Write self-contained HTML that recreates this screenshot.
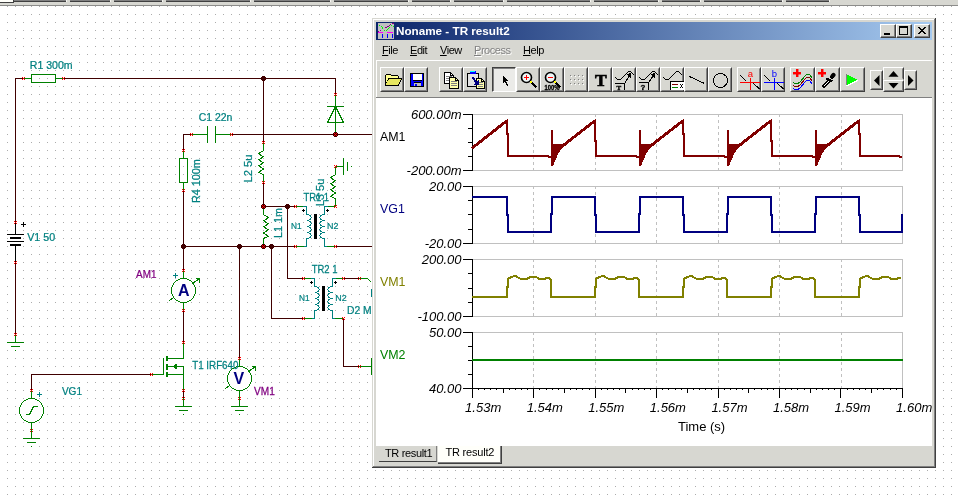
<!DOCTYPE html><html><head><meta charset="utf-8"><title>Noname - TR result2</title><style>
html,body{margin:0;padding:0}
body{width:958px;height:496px;overflow:hidden;position:relative;background:#fff;font-family:"Liberation Sans",sans-serif}
svg text{font-family:"Liberation Sans",sans-serif}
#bg,#fg{position:absolute;left:0;top:0}
#fg,#bg,#win{will-change:transform}
#win{position:absolute;left:372px;top:18px;width:564px;height:450px;background:#d7d7d1;overflow:hidden}
.ed{position:absolute}
#title{position:absolute;left:4px;top:4px;width:556px;height:18px;background:linear-gradient(90deg,#0a246a,#a6caf0)}
#tt{position:absolute;left:20px;top:2px;color:#fff;font-weight:bold;font-size:11.7px;line-height:14px;white-space:nowrap}
.cb{position:absolute;width:14px;height:12px;background:#d7d7d1;border:1px solid;border-color:#fff #404040 #404040 #fff;box-shadow:inset -1px -1px 0 #808080}
.mi{position:absolute;font-size:11px;line-height:14px;color:#000;white-space:nowrap;letter-spacing:-0.45px}
.mi.dis{color:#808080;text-shadow:1px 1px 0 #fff}
.b{position:absolute;box-sizing:border-box;border:1px solid;border-color:#fff #404040 #404040 #fff}
.b>i{position:absolute;right:0;bottom:0;left:0;top:0;border:1px solid;border-color:transparent #808080 #808080 transparent}
.b.nb{border-bottom-color:transparent}.b.nb>i{border-bottom-color:transparent}
.b.p{border-color:#404040 #fff #fff #404040;background:#ebebe8;box-shadow:inset 1px 1px 0 #808080}
.b svg{margin:-1px}
#client{position:absolute;left:4px;top:80px;width:556px;height:348px;background:#fff}
.tab{position:absolute;background:#d7d7d1;box-sizing:border-box;border-bottom:1px solid #404040;border-right:1px solid #808080;font-size:11px}
.tab.act{background:#fffffa;border-right:1px solid #404040;box-shadow:inset -1px -1px 0 #808080}
.tab span{position:absolute;white-space:nowrap;line-height:14px;letter-spacing:-0.35px}
</style></head><body>
<svg id="bg" width="958" height="496" shape-rendering="crispEdges"><defs><pattern id="dots" x="0" y="0" width="8" height="8" patternUnits="userSpaceOnUse"><rect x="7" y="6" width="1" height="1" fill="#acacac"/></pattern></defs>
<rect x="0" y="0" width="958" height="496" fill="url(#dots)"/>
<rect x="0" y="0" width="958" height="5" fill="#d7d7d1"/><rect x="0" y="5" width="958" height="1" fill="#8c8c8a"/><rect x="14" y="0" width="52" height="1" fill="#808080"/><rect x="14" y="1" width="52" height="1" fill="#404040"/><rect x="66" y="0" width="1" height="2" fill="#f4f4f0"/><rect x="70" y="0" width="40" height="1" fill="#808080"/><rect x="70" y="1" width="40" height="1" fill="#404040"/><rect x="110" y="0" width="1" height="2" fill="#f4f4f0"/><rect x="114" y="0" width="48" height="1" fill="#808080"/><rect x="114" y="1" width="48" height="1" fill="#404040"/><rect x="162" y="0" width="1" height="2" fill="#f4f4f0"/><rect x="166" y="0" width="84" height="1" fill="#808080"/><rect x="166" y="1" width="84" height="1" fill="#404040"/><rect x="250" y="0" width="1" height="2" fill="#f4f4f0"/><rect x="254" y="0" width="76" height="1" fill="#808080"/><rect x="254" y="1" width="76" height="1" fill="#404040"/><rect x="330" y="0" width="1" height="2" fill="#f4f4f0"/><rect x="334" y="0" width="74" height="1" fill="#808080"/><rect x="334" y="1" width="74" height="1" fill="#404040"/><rect x="408" y="0" width="1" height="2" fill="#f4f4f0"/><rect x="412" y="0" width="38" height="1" fill="#808080"/><rect x="412" y="1" width="38" height="1" fill="#404040"/><rect x="450" y="0" width="1" height="2" fill="#f4f4f0"/><rect x="454" y="0" width="49" height="1" fill="#808080"/><rect x="454" y="1" width="49" height="1" fill="#404040"/><rect x="503" y="0" width="1" height="2" fill="#f4f4f0"/><rect x="507" y="0" width="83" height="1" fill="#808080"/><rect x="507" y="1" width="83" height="1" fill="#404040"/><rect x="590" y="0" width="1" height="2" fill="#f4f4f0"/><rect x="594" y="0" width="64" height="1" fill="#808080"/><rect x="594" y="1" width="64" height="1" fill="#404040"/><rect x="658" y="0" width="1" height="2" fill="#f4f4f0"/><rect x="662" y="0" width="38" height="1" fill="#808080"/><rect x="662" y="1" width="38" height="1" fill="#404040"/><rect x="700" y="0" width="1" height="2" fill="#f4f4f0"/><rect x="704" y="0" width="78" height="1" fill="#808080"/><rect x="704" y="1" width="78" height="1" fill="#404040"/><rect x="782" y="0" width="1" height="2" fill="#f4f4f0"/><rect x="786" y="0" width="43" height="1" fill="#808080"/><rect x="786" y="1" width="43" height="1" fill="#404040"/><rect x="829" y="0" width="1" height="2" fill="#f4f4f0"/><rect x="0" y="0" width="13" height="2" fill="#fffffa"/><rect x="0" y="2" width="14" height="1" fill="#404040"/><rect x="13" y="0" width="1" height="3" fill="#404040"/>
<rect x="15" y="78" width="9" height="1" fill="#400000"/>
<rect x="15" y="78" width="1" height="145" fill="#400000"/>
<rect x="63" y="78" width="273" height="1" fill="#400000"/>
<rect x="335" y="78" width="1" height="17" fill="#400000"/>
<rect x="263" y="78" width="1" height="65" fill="#400000"/>
<rect x="183" y="134" width="9" height="1" fill="#400000"/>
<rect x="183" y="134" width="1" height="17" fill="#400000"/>
<rect x="231" y="134" width="150" height="1" fill="#400000"/>
<rect x="183" y="190" width="1" height="81" fill="#400000"/>
<rect x="263" y="182" width="1" height="25" fill="#400000"/>
<rect x="263" y="206" width="33" height="1" fill="#400000"/>
<rect x="183" y="246" width="113" height="1" fill="#400000"/>
<rect x="335" y="246" width="46" height="1" fill="#400000"/>
<rect x="287" y="206" width="1" height="73" fill="#400000"/>
<rect x="287" y="278" width="17" height="1" fill="#400000"/>
<rect x="271" y="246" width="1" height="73" fill="#400000"/>
<rect x="271" y="318" width="33" height="1" fill="#400000"/>
<rect x="239" y="246" width="1" height="113" fill="#400000"/>
<rect x="183" y="310" width="1" height="33" fill="#400000"/>
<rect x="183" y="390" width="1" height="9" fill="#400000"/>
<rect x="15" y="262" width="1" height="73" fill="#400000"/>
<rect x="31" y="374" width="121" height="1" fill="#400000"/>
<rect x="31" y="374" width="1" height="17" fill="#400000"/>
<rect x="343" y="278" width="17" height="1" fill="#400000"/>
<rect x="343" y="318" width="1" height="49" fill="#400000"/>
<rect x="343" y="366" width="17" height="1" fill="#400000"/>
<rect x="23" y="78" width="9" height="1" fill="#008000"/>
<rect x="55" y="78" width="9" height="1" fill="#008000"/>
<rect x="31" y="74" width="25" height="1" fill="#008000"/>
<rect x="31" y="82" width="25" height="1" fill="#008000"/>
<rect x="31" y="74" width="1" height="9" fill="#008000"/>
<rect x="55" y="74" width="1" height="9" fill="#008000"/>
<rect x="22" y="77" width="1" height="1" fill="#ff0000"/><rect x="24" y="77" width="1" height="1" fill="#ff0000"/><rect x="23" y="78" width="1" height="1" fill="#ff0000"/><rect x="22" y="79" width="1" height="1" fill="#ff0000"/><rect x="24" y="79" width="1" height="1" fill="#ff0000"/>
<rect x="62" y="77" width="1" height="1" fill="#ff0000"/><rect x="64" y="77" width="1" height="1" fill="#ff0000"/><rect x="63" y="78" width="1" height="1" fill="#ff0000"/><rect x="62" y="79" width="1" height="1" fill="#ff0000"/><rect x="64" y="79" width="1" height="1" fill="#ff0000"/>
<text transform="translate(29.84,69) scale(0.9605,1)" fill="#008080" stroke="#008080" stroke-width="0.25" font-size="11">R1 300m</text>
<rect x="191" y="134" width="17" height="1" fill="#008000"/>
<rect x="215" y="134" width="17" height="1" fill="#008000"/>
<rect x="207" y="126" width="1" height="17" fill="#008000"/>
<rect x="215" y="126" width="1" height="17" fill="#008000"/>
<rect x="190" y="133" width="1" height="1" fill="#ff0000"/><rect x="192" y="133" width="1" height="1" fill="#ff0000"/><rect x="191" y="134" width="1" height="1" fill="#ff0000"/><rect x="190" y="135" width="1" height="1" fill="#ff0000"/><rect x="192" y="135" width="1" height="1" fill="#ff0000"/>
<rect x="230" y="133" width="1" height="1" fill="#ff0000"/><rect x="232" y="133" width="1" height="1" fill="#ff0000"/><rect x="231" y="134" width="1" height="1" fill="#ff0000"/><rect x="230" y="135" width="1" height="1" fill="#ff0000"/><rect x="232" y="135" width="1" height="1" fill="#ff0000"/>
<text transform="translate(198.7,121.3) scale(0.9514,1)" fill="#008080" stroke="#008080" stroke-width="0.25" font-size="11">C1 22n</text>
<rect x="183" y="150" width="1" height="9" fill="#008000"/>
<rect x="183" y="182" width="1" height="9" fill="#008000"/>
<rect x="179" y="158" width="9" height="1" fill="#008000"/>
<rect x="179" y="182" width="9" height="1" fill="#008000"/>
<rect x="179" y="158" width="1" height="25" fill="#008000"/>
<rect x="187" y="158" width="1" height="25" fill="#008000"/>
<rect x="182" y="149" width="1" height="1" fill="#ff0000"/><rect x="184" y="149" width="1" height="1" fill="#ff0000"/><rect x="183" y="150" width="1" height="1" fill="#ff0000"/><rect x="182" y="151" width="1" height="1" fill="#ff0000"/><rect x="184" y="151" width="1" height="1" fill="#ff0000"/>
<rect x="182" y="189" width="1" height="1" fill="#ff0000"/><rect x="184" y="189" width="1" height="1" fill="#ff0000"/><rect x="183" y="190" width="1" height="1" fill="#ff0000"/><rect x="182" y="191" width="1" height="1" fill="#ff0000"/><rect x="184" y="191" width="1" height="1" fill="#ff0000"/>
<text transform="translate(200,203.08) rotate(-90) scale(0.9837,1)" fill="#008080" stroke="#008080" stroke-width="0.25" font-size="11">R4 100m</text>
<rect x="335" y="94" width="1" height="41" fill="#008000"/>
<rect x="327" y="106" width="17" height="1" fill="#008000"/>
<rect x="327" y="122" width="17" height="1" fill="#008000"/>
<line x1="335.5" y1="106.5" x2="327.5" y2="122.5" stroke="#008000" stroke-width="1"/>
<line x1="335.5" y1="106.5" x2="343.5" y2="122.5" stroke="#008000" stroke-width="1"/>
<rect x="334" y="93" width="1" height="1" fill="#ff0000"/><rect x="336" y="93" width="1" height="1" fill="#ff0000"/><rect x="335" y="94" width="1" height="1" fill="#ff0000"/><rect x="334" y="95" width="1" height="1" fill="#ff0000"/><rect x="336" y="95" width="1" height="1" fill="#ff0000"/>
<rect x="334" y="132" width="3" height="5" fill="#400000"/><rect x="333" y="133" width="5" height="3" fill="#400000"/>
<rect x="334" y="133" width="1" height="1" fill="#ff0000"/><rect x="336" y="133" width="1" height="1" fill="#ff0000"/><rect x="335" y="134" width="1" height="1" fill="#ff0000"/><rect x="334" y="135" width="1" height="1" fill="#ff0000"/><rect x="336" y="135" width="1" height="1" fill="#ff0000"/>
<rect x="262" y="76" width="3" height="5" fill="#400000"/><rect x="261" y="77" width="5" height="3" fill="#400000"/>
<rect x="263" y="142" width="1" height="9" fill="#008000"/>
<polyline points="263.5,150.5 258.5,153.7 263.5,156.8 258.5,159.8 263.5,162.8 258.5,165.8 263.5,169.0 258.5,172.3 263.5,174.5" fill="none" stroke="#008000" stroke-width="1" stroke-linejoin="bevel" />
<rect x="263" y="174" width="1" height="9" fill="#008000"/>
<rect x="262" y="141" width="1" height="1" fill="#ff0000"/><rect x="264" y="141" width="1" height="1" fill="#ff0000"/><rect x="263" y="142" width="1" height="1" fill="#ff0000"/><rect x="262" y="143" width="1" height="1" fill="#ff0000"/><rect x="264" y="143" width="1" height="1" fill="#ff0000"/>
<rect x="262" y="181" width="1" height="1" fill="#ff0000"/><rect x="264" y="181" width="1" height="1" fill="#ff0000"/><rect x="263" y="182" width="1" height="1" fill="#ff0000"/><rect x="262" y="183" width="1" height="1" fill="#ff0000"/><rect x="264" y="183" width="1" height="1" fill="#ff0000"/>
<text transform="translate(252,182.52) rotate(-90) scale(1.0192,1)" fill="#008080" stroke="#008080" stroke-width="0.25" font-size="11">L2 5u</text>
<rect x="335" y="166" width="9" height="1" fill="#008000"/>
<rect x="343" y="158" width="1" height="17" fill="#008000"/>
<rect x="347" y="162" width="1" height="9" fill="#008000"/>
<rect x="351" y="166" width="1" height="1" fill="#008000"/>
<rect x="335" y="166" width="1" height="9" fill="#008000"/>
<polyline points="335.5,174.5 330.5,177.7 335.5,180.8 330.5,183.8 335.5,186.8 330.5,189.8 335.5,193.0 330.5,196.3 335.5,198.5" fill="none" stroke="#008000" stroke-width="1" stroke-linejoin="bevel" />
<rect x="335" y="198" width="1" height="9" fill="#008000"/>
<rect x="334" y="165" width="1" height="1" fill="#ff0000"/><rect x="336" y="165" width="1" height="1" fill="#ff0000"/><rect x="335" y="166" width="1" height="1" fill="#ff0000"/><rect x="334" y="167" width="1" height="1" fill="#ff0000"/><rect x="336" y="167" width="1" height="1" fill="#ff0000"/>
<rect x="334" y="205" width="1" height="1" fill="#ff0000"/><rect x="336" y="205" width="1" height="1" fill="#ff0000"/><rect x="335" y="206" width="1" height="1" fill="#ff0000"/><rect x="334" y="207" width="1" height="1" fill="#ff0000"/><rect x="336" y="207" width="1" height="1" fill="#ff0000"/>
<text transform="translate(323.9,206.3) rotate(-90) scale(1.0038,1)" fill="#008080" stroke="#008080" stroke-width="0.25" font-size="11">L3 5u</text>
<rect x="263" y="206" width="1" height="9" fill="#008000"/>
<polyline points="263.5,214.5 268.5,217.7 263.5,220.8 268.5,223.8 263.5,226.8 268.5,229.8 263.5,233.0 268.5,236.3 263.5,238.5" fill="none" stroke="#008000" stroke-width="1" stroke-linejoin="bevel" />
<rect x="263" y="238" width="1" height="9" fill="#008000"/>
<rect x="262" y="204" width="3" height="5" fill="#400000"/><rect x="261" y="205" width="5" height="3" fill="#400000"/>
<rect x="262" y="205" width="1" height="1" fill="#ff0000"/><rect x="264" y="205" width="1" height="1" fill="#ff0000"/><rect x="263" y="206" width="1" height="1" fill="#ff0000"/><rect x="262" y="207" width="1" height="1" fill="#ff0000"/><rect x="264" y="207" width="1" height="1" fill="#ff0000"/>
<rect x="262" y="244" width="3" height="5" fill="#400000"/><rect x="261" y="245" width="5" height="3" fill="#400000"/>
<rect x="262" y="245" width="1" height="1" fill="#ff0000"/><rect x="264" y="245" width="1" height="1" fill="#ff0000"/><rect x="263" y="246" width="1" height="1" fill="#ff0000"/><rect x="262" y="247" width="1" height="1" fill="#ff0000"/><rect x="264" y="247" width="1" height="1" fill="#ff0000"/>
<rect x="286" y="204" width="3" height="5" fill="#400000"/><rect x="285" y="205" width="5" height="3" fill="#400000"/>
<rect x="270" y="244" width="3" height="5" fill="#400000"/><rect x="269" y="245" width="5" height="3" fill="#400000"/>
<rect x="182" y="244" width="3" height="5" fill="#400000"/><rect x="181" y="245" width="5" height="3" fill="#400000"/>
<rect x="238" y="244" width="3" height="5" fill="#400000"/><rect x="237" y="245" width="5" height="3" fill="#400000"/>
<text transform="translate(282,237.98) rotate(-90) scale(0.9759,1)" fill="#008080" stroke="#008080" stroke-width="0.25" font-size="11">L1 1m</text>
<rect x="295" y="206" width="9" height="1" fill="#008000"/>
<rect x="303" y="206" width="4" height="1" fill="#008080"/>
<rect x="306" y="206" width="1" height="9" fill="#008080"/>
<path d="M306.5,214.5a4.6,3 0 0 1 0,6a4.6,3 0 0 1 0,6a4.6,3 0 0 1 0,6a4.6,3 0 0 1 0,6" fill="none" stroke="#008080" stroke-width="1"/>
<rect x="306" y="238" width="1" height="9" fill="#008080"/>
<rect x="303" y="246" width="4" height="1" fill="#008080"/>
<rect x="295" y="246" width="9" height="1" fill="#008000"/>
<rect x="327" y="206" width="9" height="1" fill="#008000"/>
<rect x="324" y="206" width="4" height="1" fill="#008080"/>
<rect x="324" y="206" width="1" height="9" fill="#008080"/>
<path d="M324.5,214.5a4.6,3 0 0 0 0,6a4.6,3 0 0 0 0,6a4.6,3 0 0 0 0,6a4.6,3 0 0 0 0,6" fill="none" stroke="#008080" stroke-width="1"/>
<rect x="324" y="238" width="1" height="9" fill="#008080"/>
<rect x="324" y="246" width="4" height="1" fill="#008080"/>
<rect x="327" y="246" width="9" height="1" fill="#008000"/>
<rect x="314" y="214" width="3" height="25" fill="#000"/>
<rect x="303" y="210" width="1" height="1" fill="#000"/>
<rect x="302" y="210" width="3" height="1" fill="#000"/>
<rect x="303" y="209" width="1" height="3" fill="#000"/>
<rect x="327" y="210" width="1" height="1" fill="#000"/>
<rect x="326" y="210" width="3" height="1" fill="#000"/>
<rect x="327" y="209" width="1" height="3" fill="#000"/>
<rect x="294" y="205" width="1" height="1" fill="#ff0000"/><rect x="296" y="205" width="1" height="1" fill="#ff0000"/><rect x="295" y="206" width="1" height="1" fill="#ff0000"/><rect x="294" y="207" width="1" height="1" fill="#ff0000"/><rect x="296" y="207" width="1" height="1" fill="#ff0000"/>
<rect x="294" y="245" width="1" height="1" fill="#ff0000"/><rect x="296" y="245" width="1" height="1" fill="#ff0000"/><rect x="295" y="246" width="1" height="1" fill="#ff0000"/><rect x="294" y="247" width="1" height="1" fill="#ff0000"/><rect x="296" y="247" width="1" height="1" fill="#ff0000"/>
<rect x="334" y="205" width="1" height="1" fill="#ff0000"/><rect x="336" y="205" width="1" height="1" fill="#ff0000"/><rect x="335" y="206" width="1" height="1" fill="#ff0000"/><rect x="334" y="207" width="1" height="1" fill="#ff0000"/><rect x="336" y="207" width="1" height="1" fill="#ff0000"/>
<rect x="334" y="245" width="1" height="1" fill="#ff0000"/><rect x="336" y="245" width="1" height="1" fill="#ff0000"/><rect x="335" y="246" width="1" height="1" fill="#ff0000"/><rect x="334" y="247" width="1" height="1" fill="#ff0000"/><rect x="336" y="247" width="1" height="1" fill="#ff0000"/>
<text transform="translate(290.93,229) scale(0.8727,1)" fill="#008080" stroke="#008080" stroke-width="0.25" font-size="9.5">N1</text>
<text transform="translate(327.06,229) scale(0.9364,1)" fill="#008080" stroke="#008080" stroke-width="0.25" font-size="9.5">N2</text>
<text transform="translate(303.4,200.5) scale(0.8586,1)" fill="#008080" stroke="#008080" stroke-width="0.25" font-size="11">TR1 1</text>
<rect x="303" y="278" width="9" height="1" fill="#008000"/>
<rect x="311" y="278" width="4" height="1" fill="#008080"/>
<rect x="314" y="278" width="1" height="9" fill="#008080"/>
<path d="M314.5,286.5a4.6,3 0 0 1 0,6a4.6,3 0 0 1 0,6a4.6,3 0 0 1 0,6a4.6,3 0 0 1 0,6" fill="none" stroke="#008080" stroke-width="1"/>
<rect x="314" y="310" width="1" height="9" fill="#008080"/>
<rect x="311" y="318" width="4" height="1" fill="#008080"/>
<rect x="303" y="318" width="9" height="1" fill="#008000"/>
<rect x="335" y="278" width="9" height="1" fill="#008000"/>
<rect x="332" y="278" width="4" height="1" fill="#008080"/>
<rect x="332" y="278" width="1" height="9" fill="#008080"/>
<path d="M332.5,286.5a4.6,3 0 0 0 0,6a4.6,3 0 0 0 0,6a4.6,3 0 0 0 0,6a4.6,3 0 0 0 0,6" fill="none" stroke="#008080" stroke-width="1"/>
<rect x="332" y="310" width="1" height="9" fill="#008080"/>
<rect x="332" y="318" width="4" height="1" fill="#008080"/>
<rect x="335" y="318" width="9" height="1" fill="#008000"/>
<rect x="322" y="286" width="3" height="25" fill="#000"/>
<rect x="311" y="282" width="1" height="1" fill="#000"/>
<rect x="310" y="282" width="3" height="1" fill="#000"/>
<rect x="311" y="281" width="1" height="3" fill="#000"/>
<rect x="335" y="282" width="1" height="1" fill="#000"/>
<rect x="334" y="282" width="3" height="1" fill="#000"/>
<rect x="335" y="281" width="1" height="3" fill="#000"/>
<rect x="302" y="277" width="1" height="1" fill="#ff0000"/><rect x="304" y="277" width="1" height="1" fill="#ff0000"/><rect x="303" y="278" width="1" height="1" fill="#ff0000"/><rect x="302" y="279" width="1" height="1" fill="#ff0000"/><rect x="304" y="279" width="1" height="1" fill="#ff0000"/>
<rect x="302" y="317" width="1" height="1" fill="#ff0000"/><rect x="304" y="317" width="1" height="1" fill="#ff0000"/><rect x="303" y="318" width="1" height="1" fill="#ff0000"/><rect x="302" y="319" width="1" height="1" fill="#ff0000"/><rect x="304" y="319" width="1" height="1" fill="#ff0000"/>
<rect x="342" y="277" width="1" height="1" fill="#ff0000"/><rect x="344" y="277" width="1" height="1" fill="#ff0000"/><rect x="343" y="278" width="1" height="1" fill="#ff0000"/><rect x="342" y="279" width="1" height="1" fill="#ff0000"/><rect x="344" y="279" width="1" height="1" fill="#ff0000"/>
<rect x="342" y="317" width="1" height="1" fill="#ff0000"/><rect x="344" y="317" width="1" height="1" fill="#ff0000"/><rect x="343" y="318" width="1" height="1" fill="#ff0000"/><rect x="342" y="319" width="1" height="1" fill="#ff0000"/><rect x="344" y="319" width="1" height="1" fill="#ff0000"/>
<text transform="translate(299.03,300.6) scale(0.8727,1)" fill="#008080" stroke="#008080" stroke-width="0.25" font-size="9.5">N1</text>
<text transform="translate(335.26,300.6) scale(0.9364,1)" fill="#008080" stroke="#008080" stroke-width="0.25" font-size="9.5">N2</text>
<text transform="translate(311.7,273) scale(0.8621,1)" fill="#008080" stroke="#008080" stroke-width="0.25" font-size="11">TR2 1</text>
<rect x="358" y="277" width="1" height="1" fill="#ff0000"/><rect x="360" y="277" width="1" height="1" fill="#ff0000"/><rect x="359" y="278" width="1" height="1" fill="#ff0000"/><rect x="358" y="279" width="1" height="1" fill="#ff0000"/><rect x="360" y="279" width="1" height="1" fill="#ff0000"/>
<rect x="359" y="278" width="9" height="1" fill="#008000"/>
<line x1="367.5" y1="278.5" x2="371.5" y2="282.5" stroke="#008000" stroke-width="1"/>
<text transform="translate(347.06,313.8) scale(0.94,1)" fill="#008080" stroke="#008080" stroke-width="0.25" font-size="11">D2 M</text>
<rect x="371" y="289" width="1" height="8" fill="#008080"/>
<rect x="358" y="365" width="1" height="1" fill="#ff0000"/><rect x="360" y="365" width="1" height="1" fill="#ff0000"/><rect x="359" y="366" width="1" height="1" fill="#ff0000"/><rect x="358" y="367" width="1" height="1" fill="#ff0000"/><rect x="360" y="367" width="1" height="1" fill="#ff0000"/>
<rect x="359" y="366" width="13" height="1" fill="#008000"/>
<rect x="371" y="358" width="1" height="17" fill="#008000"/>
<rect x="15" y="222" width="1" height="13" fill="#000"/>
<rect x="7" y="234" width="17" height="1" fill="#000"/>
<rect x="10" y="237" width="11" height="2" fill="#000"/>
<rect x="7" y="241" width="17" height="1" fill="#000"/>
<rect x="10" y="244" width="11" height="2" fill="#000"/>
<rect x="15" y="246" width="1" height="17" fill="#000"/>
<rect x="14" y="221" width="1" height="1" fill="#ff0000"/><rect x="16" y="221" width="1" height="1" fill="#ff0000"/><rect x="15" y="222" width="1" height="1" fill="#ff0000"/><rect x="14" y="223" width="1" height="1" fill="#ff0000"/><rect x="16" y="223" width="1" height="1" fill="#ff0000"/>
<rect x="14" y="261" width="1" height="1" fill="#ff0000"/><rect x="16" y="261" width="1" height="1" fill="#ff0000"/><rect x="15" y="262" width="1" height="1" fill="#ff0000"/><rect x="14" y="263" width="1" height="1" fill="#ff0000"/><rect x="16" y="263" width="1" height="1" fill="#ff0000"/>
<rect x="21" y="224" width="5" height="1" fill="#000"/>
<rect x="23" y="222" width="1" height="5" fill="#000"/>
<text transform="translate(27.2,241) scale(0.9724,1)" fill="#008080" stroke="#008080" stroke-width="0.25" font-size="11">V1 50</text>
<rect x="15" y="334" width="1" height="9" fill="#008000"/><rect x="7" y="342" width="17" height="1" fill="#008000"/><rect x="11" y="346" width="9" height="1" fill="#008000"/><rect x="15" y="350" width="1" height="1" fill="#008000"/>
<rect x="14" y="333" width="1" height="1" fill="#ff0000"/><rect x="16" y="333" width="1" height="1" fill="#ff0000"/><rect x="15" y="334" width="1" height="1" fill="#ff0000"/><rect x="14" y="335" width="1" height="1" fill="#ff0000"/><rect x="16" y="335" width="1" height="1" fill="#ff0000"/>
<rect x="183" y="270" width="1" height="9" fill="#008000"/>
<rect x="183" y="302" width="1" height="9" fill="#008000"/>
<circle cx="183.5" cy="290.5" r="12" fill="#fff" stroke="#008000" stroke-width="1"/>
<line x1="169.5" y1="300.5" x2="173.5" y2="297.5" stroke="#008000" stroke-width="1"/>
<line x1="192.5" y1="283.5" x2="199.5" y2="278.5" stroke="#008000" stroke-width="1"/>
<line x1="199.5" y1="278.5" x2="195.5" y2="278.5" stroke="#008000" stroke-width="1"/>
<line x1="199.5" y1="278.5" x2="199.5" y2="282.5" stroke="#008000" stroke-width="1"/>
<text x="178" y="296" fill="#000080" font-size="16" font-weight="bold">A</text>
<rect x="182" y="269" width="1" height="1" fill="#ff0000"/><rect x="184" y="269" width="1" height="1" fill="#ff0000"/><rect x="183" y="270" width="1" height="1" fill="#ff0000"/><rect x="182" y="271" width="1" height="1" fill="#ff0000"/><rect x="184" y="271" width="1" height="1" fill="#ff0000"/>
<rect x="182" y="309" width="1" height="1" fill="#ff0000"/><rect x="184" y="309" width="1" height="1" fill="#ff0000"/><rect x="183" y="310" width="1" height="1" fill="#ff0000"/><rect x="182" y="311" width="1" height="1" fill="#ff0000"/><rect x="184" y="311" width="1" height="1" fill="#ff0000"/>
<rect x="173" y="275" width="5" height="1" fill="#008080"/>
<rect x="175" y="273" width="1" height="5" fill="#008080"/>
<text transform="translate(136.1,278) scale(0.9,1)" fill="#800080" stroke="#800080" stroke-width="0.25" font-size="11">AM1</text>
<rect x="239" y="358" width="1" height="9" fill="#008000"/>
<rect x="239" y="390" width="1" height="9" fill="#008000"/>
<circle cx="239.5" cy="378.5" r="12" fill="#fff" stroke="#008000" stroke-width="1"/>
<line x1="225.5" y1="388.5" x2="229.5" y2="385.5" stroke="#008000" stroke-width="1"/>
<line x1="248.5" y1="371.5" x2="255.5" y2="366.5" stroke="#008000" stroke-width="1"/>
<line x1="255.5" y1="366.5" x2="251.5" y2="366.5" stroke="#008000" stroke-width="1"/>
<line x1="255.5" y1="366.5" x2="255.5" y2="370.5" stroke="#008000" stroke-width="1"/>
<text x="233.5" y="384" fill="#000080" font-size="16" font-weight="bold">V</text>
<rect x="238" y="357" width="1" height="1" fill="#ff0000"/><rect x="240" y="357" width="1" height="1" fill="#ff0000"/><rect x="239" y="358" width="1" height="1" fill="#ff0000"/><rect x="238" y="359" width="1" height="1" fill="#ff0000"/><rect x="240" y="359" width="1" height="1" fill="#ff0000"/>
<rect x="238" y="397" width="1" height="1" fill="#ff0000"/><rect x="240" y="397" width="1" height="1" fill="#ff0000"/><rect x="239" y="398" width="1" height="1" fill="#ff0000"/><rect x="238" y="399" width="1" height="1" fill="#ff0000"/><rect x="240" y="399" width="1" height="1" fill="#ff0000"/>
<text transform="translate(254.0,395.2) scale(0.9182,1)" fill="#800080" stroke="#800080" stroke-width="0.25" font-size="11">VM1</text>
<rect x="239" y="398" width="1" height="9" fill="#008000"/><rect x="231" y="406" width="17" height="1" fill="#008000"/><rect x="235" y="410" width="9" height="1" fill="#008000"/><rect x="239" y="414" width="1" height="1" fill="#008000"/>
<rect x="183" y="342" width="1" height="17" fill="#008000"/>
<rect x="167" y="358" width="17" height="1" fill="#008000"/>
<rect x="166" y="356" width="2" height="5" fill="#008000"/>
<rect x="166" y="364" width="2" height="6" fill="#008000"/>
<rect x="166" y="372" width="2" height="5" fill="#008000"/>
<rect x="163" y="358" width="1" height="17" fill="#008000"/>
<rect x="151" y="374" width="13" height="1" fill="#008000"/>
<rect x="167" y="366" width="17" height="1" fill="#008000"/>
<rect x="167" y="374" width="17" height="1" fill="#008000"/>
<rect x="183" y="366" width="1" height="25" fill="#008000"/>
<polygon points="172,366.5 177,363.5 177,369.5" fill="#008000"/>
<rect x="182" y="341" width="1" height="1" fill="#ff0000"/><rect x="184" y="341" width="1" height="1" fill="#ff0000"/><rect x="183" y="342" width="1" height="1" fill="#ff0000"/><rect x="182" y="343" width="1" height="1" fill="#ff0000"/><rect x="184" y="343" width="1" height="1" fill="#ff0000"/>
<rect x="150" y="373" width="1" height="1" fill="#ff0000"/><rect x="152" y="373" width="1" height="1" fill="#ff0000"/><rect x="151" y="374" width="1" height="1" fill="#ff0000"/><rect x="150" y="375" width="1" height="1" fill="#ff0000"/><rect x="152" y="375" width="1" height="1" fill="#ff0000"/>
<rect x="182" y="389" width="1" height="1" fill="#ff0000"/><rect x="184" y="389" width="1" height="1" fill="#ff0000"/><rect x="183" y="390" width="1" height="1" fill="#ff0000"/><rect x="182" y="391" width="1" height="1" fill="#ff0000"/><rect x="184" y="391" width="1" height="1" fill="#ff0000"/>
<rect x="182" y="397" width="1" height="1" fill="#ff0000"/><rect x="184" y="397" width="1" height="1" fill="#ff0000"/><rect x="183" y="398" width="1" height="1" fill="#ff0000"/><rect x="182" y="399" width="1" height="1" fill="#ff0000"/><rect x="184" y="399" width="1" height="1" fill="#ff0000"/>
<rect x="183" y="398" width="1" height="9" fill="#008000"/><rect x="175" y="406" width="17" height="1" fill="#008000"/><rect x="179" y="410" width="9" height="1" fill="#008000"/><rect x="183" y="414" width="1" height="1" fill="#008000"/>
<text transform="translate(192.2,369) scale(0.8904,1)" fill="#008080" stroke="#008080" stroke-width="0.25" font-size="11">T1 IRF640</text>
<rect x="31" y="390" width="1" height="9" fill="#008000"/>
<rect x="31" y="422" width="1" height="9" fill="#008000"/>
<circle cx="31.5" cy="410.5" r="12" fill="#fff" stroke="#008000"/>
<polyline points="25.5,414.5 29.5,414.5 33.5,406.5 37.5,406.5" fill="none" stroke="#008000" stroke-width="1" stroke-linejoin="bevel" />
<rect x="30" y="389" width="1" height="1" fill="#ff0000"/><rect x="32" y="389" width="1" height="1" fill="#ff0000"/><rect x="31" y="390" width="1" height="1" fill="#ff0000"/><rect x="30" y="391" width="1" height="1" fill="#ff0000"/><rect x="32" y="391" width="1" height="1" fill="#ff0000"/>
<rect x="30" y="429" width="1" height="1" fill="#ff0000"/><rect x="32" y="429" width="1" height="1" fill="#ff0000"/><rect x="31" y="430" width="1" height="1" fill="#ff0000"/><rect x="30" y="431" width="1" height="1" fill="#ff0000"/><rect x="32" y="431" width="1" height="1" fill="#ff0000"/>
<rect x="31" y="430" width="1" height="9" fill="#008000"/><rect x="23" y="438" width="17" height="1" fill="#008000"/><rect x="27" y="442" width="9" height="1" fill="#008000"/><rect x="31" y="446" width="1" height="1" fill="#008000"/>
<rect x="37" y="394" width="5" height="1" fill="#008080"/>
<rect x="39" y="392" width="1" height="5" fill="#008080"/>
<text transform="translate(61.9,395) scale(0.9136,1)" fill="#008080" stroke="#008080" stroke-width="0.25" font-size="11">VG1</text>
</svg>
<div id="win">
<div class="ed" style="left:1px;top:1px;width:561px;height:1px;background:#fff"></div>
<div class="ed" style="left:1px;top:1px;width:1px;height:447px;background:#fff"></div>
<div class="ed" style="left:563px;top:0;width:1px;height:450px;background:#404040"></div>
<div class="ed" style="left:0;top:449px;width:564px;height:1px;background:#404040"></div>
<div class="ed" style="left:562px;top:1px;width:1px;height:448px;background:#808080"></div>
<div class="ed" style="left:1px;top:448px;width:562px;height:1px;background:#808080"></div>
<div id="title"><span id="tt">Noname - TR result2</span></div>
<svg class="ed" style="left:6px;top:5px" width="16" height="16" shape-rendering="crispEdges"><rect x="0" y="0" width="16" height="16" fill="#c0c0c0"/><rect x="1" y="2" width="1" height="1" fill="#00ff00"/><rect x="3" y="3" width="1" height="1" fill="#00ff00"/><rect x="4" y="4" width="1" height="1" fill="#00ff00"/><rect x="4" y="5" width="1" height="1" fill="#00ff00"/><rect x="6" y="7" width="1" height="1" fill="#00ff00"/><rect x="8" y="7" width="1" height="1" fill="#00ff00"/><rect x="9" y="6" width="1" height="1" fill="#00ff00"/><rect x="10" y="5" width="1" height="1" fill="#00ff00"/><rect x="11" y="4" width="1" height="1" fill="#00ff00"/><rect x="13" y="2" width="1" height="1" fill="#00ff00"/><rect x="15" y="3" width="1" height="1" fill="#00ff00"/><rect x="0" y="8" width="1" height="1" fill="#800080"/><rect x="2" y="7" width="1" height="1" fill="#800080"/><rect x="7" y="4" width="1" height="1" fill="#800080"/><rect x="8" y="4" width="1" height="1" fill="#800080"/><rect x="9" y="3" width="1" height="1" fill="#800080"/><rect x="10" y="3" width="1" height="1" fill="#800080"/><rect x="11" y="2" width="1" height="1" fill="#800080"/><rect x="12" y="1" width="1" height="1" fill="#800080"/><rect x="14" y="0" width="1" height="1" fill="#800080"/><rect x="15" y="0" width="1" height="1" fill="#800080"/><rect x="0" y="9" width="5" height="1" fill="#ff00ff"/><rect x="9" y="9" width="6" height="1" fill="#ff00ff"/><rect x="4" y="11" width="1" height="4" fill="#0000ff"/><rect x="9" y="11" width="1" height="4" fill="#0000ff"/><rect x="14" y="11" width="1" height="4" fill="#0000ff"/></svg>
<div class="cb" style="left:508px;top:6px"><svg width="16" height="14" shape-rendering="crispEdges" style="position:absolute;left:-1px;top:-1px"><rect x="4" y="9" width="6" height="2" fill="#000"/></svg></div>
<div class="cb" style="left:524px;top:6px"><svg width="16" height="14" shape-rendering="crispEdges" style="position:absolute;left:-1px;top:-1px"><rect x="3" y="2" width="9" height="2" fill="#000"/><rect x="3" y="2" width="1" height="9" fill="#000"/><rect x="11" y="2" width="1" height="9" fill="#000"/><rect x="3" y="10" width="9" height="1" fill="#000"/></svg></div>
<div class="cb" style="left:542px;top:6px"><svg width="16" height="14" shape-rendering="crispEdges" style="position:absolute;left:-1px;top:-1px"><rect x="4" y="3" width="2" height="1" fill="#000"/><rect x="10" y="3" width="2" height="1" fill="#000"/><rect x="5" y="4" width="2" height="1" fill="#000"/><rect x="9" y="4" width="2" height="1" fill="#000"/><rect x="6" y="5" width="2" height="1" fill="#000"/><rect x="8" y="5" width="2" height="1" fill="#000"/><rect x="7" y="6" width="2" height="1" fill="#000"/><rect x="7" y="6" width="2" height="1" fill="#000"/><rect x="8" y="7" width="2" height="1" fill="#000"/><rect x="6" y="7" width="2" height="1" fill="#000"/><rect x="9" y="8" width="2" height="1" fill="#000"/><rect x="5" y="8" width="2" height="1" fill="#000"/><rect x="10" y="9" width="2" height="1" fill="#000"/><rect x="4" y="9" width="2" height="1" fill="#000"/></svg></div>
<div class="mi" style="left:10px;top:25px"><u>F</u>ile</div>
<div class="mi" style="left:38px;top:25px"><u>E</u>dit</div>
<div class="mi" style="left:68px;top:25px"><u>V</u>iew</div>
<div class="mi dis" style="left:102px;top:25px"><u>P</u>rocess</div>
<div class="mi" style="left:151px;top:25px"><u>H</u>elp</div>
<div class="ed" style="left:4px;top:42px;width:556px;height:1px;background:#fff"></div>
<div class="ed" style="left:4px;top:42px;width:1px;height:37px;background:#fff"></div>
<div class="ed" style="left:4px;top:79px;width:556px;height:1px;background:#808080"></div>
<div class="b" style="left:8px;top:49px;width:24px;height:25px"><i></i><svg width="24" height="25" shape-rendering="crispEdges" style="position:absolute;left:0;top:0"><polygon points="5.5,8.5 6.5,7.5 10.5,7.5 11.5,8.5 17.5,8.5 18.5,9.5 18.5,11.5 5.5,11.5" fill="#ffff90" stroke="#000"/><polygon points="5.5,8.5 5.5,18.5 18.5,18.5 21.5,11.5 8.5,11.5 5.5,17" fill="#e8e860" stroke="#000"/><polygon points="6,9 6,16 8,11.5" fill="#ffff90"/><rect x="5" y="8" width="1" height="11" fill="#000"/></svg></div>
<div class="b" style="left:32px;top:49px;width:24px;height:25px"><i></i><svg width="24" height="25" shape-rendering="crispEdges" style="position:absolute;left:0;top:0"><rect x="6" y="6" width="14" height="14" fill="#000"/><rect x="7" y="7" width="12" height="12" fill="#0000ff"/><rect x="9" y="7" width="9" height="6" fill="#fff"/><rect x="9" y="13" width="9" height="1" fill="#000"/><rect x="10" y="16" width="7" height="3" fill="#c0c0c0"/><rect x="11" y="17" width="2" height="2" fill="#0000ff"/><rect x="10" y="15" width="7" height="1" fill="#000"/></svg></div>
<div class="b" style="left:67px;top:49px;width:24px;height:25px"><i></i><svg width="24" height="25" shape-rendering="crispEdges" style="position:absolute;left:0;top:0"><polygon points="5.5,5.5 11.5,5.5 14.5,8.5 14.5,16.5 5.5,16.5" fill="#fff" stroke="#000"/><polyline points="11.5,5.5 11.5,8.5 14.5,8.5" fill="none" stroke="#000"/><rect x="7" y="9" width="6" height="1" fill="#808080"/><rect x="7" y="11" width="6" height="1" fill="#808080"/><rect x="7" y="13" width="6" height="1" fill="#808080"/><polygon points="10.5,10.5 16.5,10.5 19.5,13.5 19.5,21.5 10.5,21.5" fill="#ffffaa" stroke="#000"/><polyline points="16.5,10.5 16.5,13.5 19.5,13.5" fill="none" stroke="#000"/><rect x="12" y="14" width="6" height="1" fill="#808080"/><rect x="12" y="16" width="6" height="1" fill="#808080"/><rect x="12" y="18" width="6" height="1" fill="#808080"/></svg></div>
<div class="b" style="left:91px;top:49px;width:24px;height:25px"><i></i><svg width="24" height="25" shape-rendering="crispEdges" style="position:absolute;left:0;top:0"><rect x="4.5" y="6.5" width="11" height="13" fill="#e4e4e4" stroke="#000"/><rect x="7" y="4" width="6" height="3" fill="#0000ff"/><rect x="7" y="4" width="5" height="1" fill="#00ffff"/><polygon points="13.5,11.5 18.5,11.5 21.5,14.5 21.5,21.5 13.5,21.5" fill="#ffffaa" stroke="#000"/><polyline points="18.5,11.5 18.5,14.5 21.5,14.5" fill="none" stroke="#000"/><rect x="15" y="15" width="5" height="1" fill="#808080"/><rect x="15" y="17" width="5" height="1" fill="#808080"/><rect x="15" y="19" width="5" height="1" fill="#808080"/><line x1="9.5" y1="10.5" x2="13.5" y2="15.5" stroke="#000080" stroke-width="2"/><polygon points="15.5,12.5 15.5,18 10.5,18" fill="#000080"/></svg></div>
<div class="b p" style="left:120px;top:49px;width:24px;height:25px"><svg width="24" height="25" shape-rendering="crispEdges" style="position:absolute;left:0;top:0"><polygon points="11,9 11,16.5 12.8,14.8 14.8,19 16.2,18.3 14.3,14.2 16.8,14.2" fill="#000"/></svg></div>
<div class="b" style="left:144px;top:49px;width:24px;height:25px"><i></i><svg width="24" height="25" shape-rendering="crispEdges" style="position:absolute;left:0;top:0"><circle cx="10.5" cy="10.5" r="5" fill="#eef6f6" stroke="#000" stroke-width="1.6" shape-rendering="auto"/><line x1="14.5" y1="14.5" x2="20.5" y2="20.5" stroke="#000" stroke-width="2.6"/><rect x="14" y="14" width="2" height="2" fill="#ffff00"/><rect x="8" y="10" width="5" height="1" fill="#ff0000"/><rect x="10" y="8" width="1" height="5" fill="#ff0000"/><rect x="8" y="10" width="5" height="1" fill="#ff0000"/></svg></div>
<div class="b" style="left:168px;top:49px;width:24px;height:25px"><i></i><svg width="24" height="25" shape-rendering="crispEdges" style="position:absolute;left:0;top:0"><circle cx="10.5" cy="10.5" r="5" fill="#eef6f6" stroke="#000" stroke-width="1.6" shape-rendering="auto"/><line x1="14.5" y1="14.5" x2="20.5" y2="20.5" stroke="#000" stroke-width="2.6"/><rect x="14" y="14" width="2" height="2" fill="#ffff00"/><rect x="8" y="10" width="5" height="1" fill="#ff0000"/><text x="4.5" y="23" font-size="6.5" font-weight="bold" fill="#000" stroke="#000" stroke-width="0.3" textLength="15" lengthAdjust="spacingAndGlyphs">100%</text></svg></div>
<div class="b" style="left:192px;top:49px;width:24px;height:25px"><i></i><svg width="24" height="25" shape-rendering="crispEdges" style="position:absolute;left:0;top:0"><rect x="6" y="8" width="1" height="1" fill="#808080"/><rect x="7" y="9" width="1" height="1" fill="#fff"/><rect x="6" y="12" width="1" height="1" fill="#808080"/><rect x="7" y="13" width="1" height="1" fill="#fff"/><rect x="6" y="16" width="1" height="1" fill="#808080"/><rect x="7" y="17" width="1" height="1" fill="#fff"/><rect x="10" y="8" width="1" height="1" fill="#808080"/><rect x="11" y="9" width="1" height="1" fill="#fff"/><rect x="10" y="12" width="1" height="1" fill="#808080"/><rect x="11" y="13" width="1" height="1" fill="#fff"/><rect x="10" y="16" width="1" height="1" fill="#808080"/><rect x="11" y="17" width="1" height="1" fill="#fff"/><rect x="14" y="8" width="1" height="1" fill="#808080"/><rect x="15" y="9" width="1" height="1" fill="#fff"/><rect x="14" y="12" width="1" height="1" fill="#808080"/><rect x="15" y="13" width="1" height="1" fill="#fff"/><rect x="14" y="16" width="1" height="1" fill="#808080"/><rect x="15" y="17" width="1" height="1" fill="#fff"/><rect x="18" y="8" width="1" height="1" fill="#808080"/><rect x="19" y="9" width="1" height="1" fill="#fff"/><rect x="18" y="12" width="1" height="1" fill="#808080"/><rect x="19" y="13" width="1" height="1" fill="#fff"/><rect x="18" y="16" width="1" height="1" fill="#808080"/><rect x="19" y="17" width="1" height="1" fill="#fff"/></svg></div>
<div class="b" style="left:216px;top:49px;width:24px;height:25px"><i></i><svg width="24" height="25" shape-rendering="crispEdges" style="position:absolute;left:0;top:0"><text x="12.9" y="19" font-weight="bold" font-size="17.5" text-anchor="middle" fill="#000" stroke="#000" stroke-width="0.7" style="font-family:'Liberation Serif',serif">T</text></svg></div>
<div class="b" style="left:240px;top:49px;width:24px;height:25px"><i></i><svg width="24" height="25" shape-rendering="crispEdges" style="position:absolute;left:0;top:0"><polyline points="3.5,10.5 5.5,12.5 8.5,12.5 15.5,5.5 16.5,4.5 18.5,4.5 22.5,8.5" fill="none" stroke="#000" stroke-width="1" stroke-linejoin="bevel" /><line x1="12.5" y1="16.5" x2="17.5" y2="8.5" stroke="#000" stroke-width="1"/><polygon points="19.5,5.5 15,7.5 18.5,11" fill="#000"/><rect x="3" y="16" width="10" height="1" fill="#000"/><rect x="12" y="16" width="1" height="7" fill="#000"/><text x="4.5" y="23" font-size="7" font-weight="bold" fill="#000" stroke="#000" stroke-width="0.4" style="font-family:'Liberation Serif',serif">T</text></svg></div>
<div class="b" style="left:264px;top:49px;width:24px;height:25px"><i></i><svg width="24" height="25" shape-rendering="crispEdges" style="position:absolute;left:0;top:0"><polyline points="3.5,10.5 5.5,12.5 8.5,12.5 15.5,5.5 16.5,4.5 18.5,4.5 22.5,8.5" fill="none" stroke="#000" stroke-width="1" stroke-linejoin="bevel" /><line x1="12.5" y1="15.5" x2="17.5" y2="8.5" stroke="#000" stroke-width="1"/><polygon points="19.5,5.5 15,7.5 18.5,11" fill="#000"/><rect x="3" y="15" width="10" height="1" fill="#000"/><rect x="12" y="15" width="1" height="8" fill="#000"/><text x="4.5" y="23" font-size="8" font-weight="bold" fill="#000" stroke="#000" stroke-width="0.3">?</text></svg></div>
<div class="b" style="left:288px;top:49px;width:24px;height:25px"><i></i><svg width="24" height="25" shape-rendering="crispEdges" style="position:absolute;left:0;top:0"><polyline points="3.5,10.5 5.5,12.5 8.5,12.5 15.5,5.5 16.5,4.5 18.5,4.5 22.5,8.5" fill="none" stroke="#000" stroke-width="1" stroke-linejoin="bevel" /><rect x="10" y="14" width="14" height="1" fill="#000"/><rect x="10" y="14" width="1" height="9" fill="#000"/><rect x="11" y="15" width="13" height="8" fill="#fff"/><rect x="12" y="17" width="6" height="1" fill="#800000"/><rect x="12" y="20" width="6" height="1" fill="#008000"/><rect x="20" y="17" width="1" height="1" fill="#000"/><rect x="22" y="17" width="1" height="1" fill="#000"/><rect x="21" y="18" width="1" height="1" fill="#000"/><rect x="21" y="19" width="1" height="1" fill="#000"/><rect x="20" y="20" width="1" height="1" fill="#000"/><rect x="22" y="20" width="1" height="1" fill="#000"/></svg></div>
<div class="b" style="left:312px;top:49px;width:24px;height:25px"><i></i><svg width="24" height="25" shape-rendering="crispEdges" style="position:absolute;left:0;top:0"><line x1="5.5" y1="9.5" x2="20.5" y2="16.5" stroke="#000" stroke-width="1"/></svg></div>
<div class="b" style="left:336px;top:49px;width:24px;height:25px"><i></i><svg width="24" height="25" shape-rendering="crispEdges" style="position:absolute;left:0;top:0"><circle cx="12.5" cy="13.5" r="7" fill="none" stroke="#000"/></svg></div>
<div class="b" style="left:365px;top:49px;width:24px;height:25px"><i></i><svg width="24" height="25" shape-rendering="crispEdges" style="position:absolute;left:0;top:0"><line x1="3.5" y1="8.5" x2="9.5" y2="14.5" stroke="#000" stroke-width="1"/><line x1="16.5" y1="16.5" x2="22.5" y2="22.0" stroke="#000" stroke-width="1"/><rect x="3" y="15" width="20" height="1" fill="#ff0000"/><rect x="13" y="11" width="1" height="12" fill="#ff0000"/><text x="13.5" y="10" font-size="9.5" fill="#ff0000" text-anchor="middle">a</text></svg></div>
<div class="b" style="left:389px;top:49px;width:24px;height:25px"><i></i><svg width="24" height="25" shape-rendering="crispEdges" style="position:absolute;left:0;top:0"><line x1="3.5" y1="8.5" x2="9.5" y2="14.5" stroke="#000" stroke-width="1"/><line x1="16.5" y1="16.5" x2="22.5" y2="22.0" stroke="#000" stroke-width="1"/><rect x="3" y="15" width="20" height="1" fill="#0000ff"/><rect x="13" y="11" width="1" height="12" fill="#0000ff"/><text x="13.5" y="10" font-size="9.5" fill="#0000ff" text-anchor="middle">b</text></svg></div>
<div class="b" style="left:418px;top:49px;width:25px;height:25px"><i></i><svg width="25" height="25" shape-rendering="crispEdges" style="position:absolute;left:0;top:0"><rect x="3" y="5" width="8" height="2" fill="#ff0000"/><rect x="6" y="2" width="2" height="8" fill="#ff0000"/><rect x="3" y="7" width="8" height="1" fill="rgba(255,0,0,.45)"/><rect x="8" y="2" width="1" height="8" fill="rgba(255,0,0,.45)"/><polyline points="3.5,15.5 4.5,16.5 7.5,16.5 9.5,15.5 15.5,8.5 16.5,7.5 19.5,7.5 22.5,11.5" fill="none" stroke="#008000" stroke-width="1" stroke-linejoin="bevel" /><polyline points="3.5,18.5 4.5,19.5 7.5,19.5 9.5,18.5 15.5,11.5 16.5,10.5 19.5,10.5 22.5,14.5" fill="none" stroke="#800000" stroke-width="1" stroke-linejoin="bevel" /><polyline points="3.5,21.5 4.5,22.5 7.5,22.5 9.5,21.5 15.5,14.5 16.5,13.5 19.5,13.5 22.5,17.5" fill="none" stroke="#0000ff" stroke-width="1" stroke-linejoin="bevel" /></svg></div>
<div class="b" style="left:443px;top:49px;width:25px;height:25px"><i></i><svg width="25" height="25" shape-rendering="crispEdges" style="position:absolute;left:0;top:0"><rect x="3" y="5" width="8" height="2" fill="#ff0000"/><rect x="6" y="2" width="2" height="8" fill="#ff0000"/><rect x="3" y="7" width="8" height="1" fill="rgba(255,0,0,.45)"/><rect x="8" y="2" width="1" height="8" fill="rgba(255,0,0,.45)"/><line x1="14.5" y1="13.5" x2="7.5" y2="20.5" stroke="#000" stroke-width="3"/><line x1="14.5" y1="13.5" x2="8.5" y2="19.5" stroke="#fff" stroke-width="1"/><line x1="11.5" y1="11.5" x2="17.5" y2="14.5" stroke="#000" stroke-width="2"/><ellipse cx="18" cy="8.5" rx="2.8" ry="2.2" fill="#000" transform="rotate(-45 18 8.5)" shape-rendering="auto"/><line x1="15.5" y1="11.5" x2="17.5" y2="9.5" stroke="#000" stroke-width="3"/></svg></div>
<div class="b" style="left:468px;top:49px;width:25px;height:25px"><i></i><svg width="25" height="25" shape-rendering="crispEdges" style="position:absolute;left:0;top:0"><polygon points="6,7 6,18.5 17.5,12.7" fill="#00ff00"/><rect x="6" y="7" width="1" height="11" fill="#808080"/><line x1="6.5" y1="19.0" x2="18.0" y2="13.2" stroke="#fff" stroke-width="1"/></svg></div>
<div class="b" style="left:498px;top:52px;width:13px;height:20px"><i></i><svg width="13" height="20" style="position:absolute;left:0;top:0"><polygon points="9.5,5 9.5,16 4,10.5" fill="#000"/></svg></div>
<div class="b" style="left:532px;top:52px;width:13px;height:20px"><i></i><svg width="13" height="20" style="position:absolute;left:0;top:0"><polygon points="4,5 4,16 9.5,10.5" fill="#000"/></svg></div>
<div class="b nb" style="left:511px;top:49px;width:21px;height:13px"><i></i><svg width="21" height="13" style="position:absolute;left:0;top:0"><polygon points="5.5,9.7 15.5,9.7 10.5,4" fill="#000"/></svg></div>
<div class="b" style="left:511px;top:62px;width:21px;height:12px"><i></i><svg width="21" height="12" style="position:absolute;left:0;top:0"><polygon points="5.5,3 15.5,3 10.5,8.5" fill="#000"/></svg></div>
<div id="client"></div>
<div class="tab" style="left:7px;top:428px;width:58px;height:16px"><span style="left:6px;top:0px">TR result1</span></div>
<div class="tab act" style="left:66px;top:428px;width:64px;height:18px"><span style="left:7.5px;top:-1px;letter-spacing:-0.2px">TR result2</span></div>
</div>
<svg id="fg" width="958" height="496" shape-rendering="crispEdges">
<rect x="473" y="114" width="430" height="1" fill="#c0c0c0"/>
<rect x="473" y="170" width="430" height="1" fill="#c0c0c0"/>
<rect x="902" y="114" width="1" height="57" fill="#c0c0c0"/>
<line x1="533.5" y1="114" x2="533.5" y2="170" stroke="#c0c0c0" stroke-width="1" stroke-dasharray="3 3"/>
<line x1="595.5" y1="114" x2="595.5" y2="170" stroke="#c0c0c0" stroke-width="1" stroke-dasharray="3 3"/>
<line x1="656.5" y1="114" x2="656.5" y2="170" stroke="#c0c0c0" stroke-width="1" stroke-dasharray="3 3"/>
<line x1="718.5" y1="114" x2="718.5" y2="170" stroke="#c0c0c0" stroke-width="1" stroke-dasharray="3 3"/>
<line x1="779.5" y1="114" x2="779.5" y2="170" stroke="#c0c0c0" stroke-width="1" stroke-dasharray="3 3"/>
<line x1="841.5" y1="114" x2="841.5" y2="170" stroke="#c0c0c0" stroke-width="1" stroke-dasharray="3 3"/>
<rect x="472" y="114" width="1" height="57" fill="#000"/>
<rect x="463" y="114" width="10" height="1" fill="#000"/>
<rect x="468" y="128" width="5" height="1" fill="#000"/>
<rect x="468" y="142" width="5" height="1" fill="#000"/>
<rect x="468" y="156" width="5" height="1" fill="#000"/>
<rect x="463" y="170" width="10" height="1" fill="#000"/>
<rect x="473" y="186" width="430" height="1" fill="#c0c0c0"/>
<rect x="473" y="243" width="430" height="1" fill="#c0c0c0"/>
<rect x="902" y="186" width="1" height="58" fill="#c0c0c0"/>
<line x1="533.5" y1="186" x2="533.5" y2="243" stroke="#c0c0c0" stroke-width="1" stroke-dasharray="3 3"/>
<line x1="595.5" y1="186" x2="595.5" y2="243" stroke="#c0c0c0" stroke-width="1" stroke-dasharray="3 3"/>
<line x1="656.5" y1="186" x2="656.5" y2="243" stroke="#c0c0c0" stroke-width="1" stroke-dasharray="3 3"/>
<line x1="718.5" y1="186" x2="718.5" y2="243" stroke="#c0c0c0" stroke-width="1" stroke-dasharray="3 3"/>
<line x1="779.5" y1="186" x2="779.5" y2="243" stroke="#c0c0c0" stroke-width="1" stroke-dasharray="3 3"/>
<line x1="841.5" y1="186" x2="841.5" y2="243" stroke="#c0c0c0" stroke-width="1" stroke-dasharray="3 3"/>
<rect x="472" y="186" width="1" height="58" fill="#000"/>
<rect x="463" y="186" width="10" height="1" fill="#000"/>
<rect x="468" y="200" width="5" height="1" fill="#000"/>
<rect x="468" y="214" width="5" height="1" fill="#000"/>
<rect x="468" y="229" width="5" height="1" fill="#000"/>
<rect x="463" y="243" width="10" height="1" fill="#000"/>
<rect x="473" y="259" width="430" height="1" fill="#c0c0c0"/>
<rect x="473" y="316" width="430" height="1" fill="#c0c0c0"/>
<rect x="902" y="259" width="1" height="58" fill="#c0c0c0"/>
<line x1="533.5" y1="259" x2="533.5" y2="316" stroke="#c0c0c0" stroke-width="1" stroke-dasharray="3 3"/>
<line x1="595.5" y1="259" x2="595.5" y2="316" stroke="#c0c0c0" stroke-width="1" stroke-dasharray="3 3"/>
<line x1="656.5" y1="259" x2="656.5" y2="316" stroke="#c0c0c0" stroke-width="1" stroke-dasharray="3 3"/>
<line x1="718.5" y1="259" x2="718.5" y2="316" stroke="#c0c0c0" stroke-width="1" stroke-dasharray="3 3"/>
<line x1="779.5" y1="259" x2="779.5" y2="316" stroke="#c0c0c0" stroke-width="1" stroke-dasharray="3 3"/>
<line x1="841.5" y1="259" x2="841.5" y2="316" stroke="#c0c0c0" stroke-width="1" stroke-dasharray="3 3"/>
<rect x="472" y="259" width="1" height="58" fill="#000"/>
<rect x="463" y="259" width="10" height="1" fill="#000"/>
<rect x="468" y="273" width="5" height="1" fill="#000"/>
<rect x="468" y="288" width="5" height="1" fill="#000"/>
<rect x="468" y="302" width="5" height="1" fill="#000"/>
<rect x="463" y="316" width="10" height="1" fill="#000"/>
<rect x="473" y="332" width="430" height="1" fill="#c0c0c0"/>
<rect x="473" y="388" width="430" height="1" fill="#c0c0c0"/>
<rect x="902" y="332" width="1" height="57" fill="#c0c0c0"/>
<line x1="533.5" y1="332" x2="533.5" y2="388" stroke="#c0c0c0" stroke-width="1" stroke-dasharray="3 3"/>
<line x1="595.5" y1="332" x2="595.5" y2="388" stroke="#c0c0c0" stroke-width="1" stroke-dasharray="3 3"/>
<line x1="656.5" y1="332" x2="656.5" y2="388" stroke="#c0c0c0" stroke-width="1" stroke-dasharray="3 3"/>
<line x1="718.5" y1="332" x2="718.5" y2="388" stroke="#c0c0c0" stroke-width="1" stroke-dasharray="3 3"/>
<line x1="779.5" y1="332" x2="779.5" y2="388" stroke="#c0c0c0" stroke-width="1" stroke-dasharray="3 3"/>
<line x1="841.5" y1="332" x2="841.5" y2="388" stroke="#c0c0c0" stroke-width="1" stroke-dasharray="3 3"/>
<rect x="472" y="332" width="1" height="57" fill="#000"/>
<rect x="463" y="332" width="10" height="1" fill="#000"/>
<rect x="468" y="346" width="5" height="1" fill="#000"/>
<rect x="468" y="360" width="5" height="1" fill="#000"/>
<rect x="468" y="374" width="5" height="1" fill="#000"/>
<rect x="463" y="388" width="10" height="1" fill="#000"/>
<rect x="472" y="388" width="431" height="1" fill="#000"/>
<rect x="472" y="388" width="1" height="10" fill="#000"/>
<rect x="478" y="388" width="1" height="2" fill="#000"/>
<rect x="484" y="388" width="1" height="2" fill="#000"/>
<rect x="490" y="388" width="1" height="2" fill="#000"/>
<rect x="496" y="388" width="1" height="2" fill="#000"/>
<rect x="503" y="388" width="1" height="5" fill="#000"/>
<rect x="509" y="388" width="1" height="2" fill="#000"/>
<rect x="515" y="388" width="1" height="2" fill="#000"/>
<rect x="521" y="388" width="1" height="2" fill="#000"/>
<rect x="527" y="388" width="1" height="2" fill="#000"/>
<rect x="533" y="388" width="1" height="10" fill="#000"/>
<rect x="539" y="388" width="1" height="2" fill="#000"/>
<rect x="546" y="388" width="1" height="2" fill="#000"/>
<rect x="552" y="388" width="1" height="2" fill="#000"/>
<rect x="558" y="388" width="1" height="2" fill="#000"/>
<rect x="564" y="388" width="1" height="5" fill="#000"/>
<rect x="570" y="388" width="1" height="2" fill="#000"/>
<rect x="576" y="388" width="1" height="2" fill="#000"/>
<rect x="582" y="388" width="1" height="2" fill="#000"/>
<rect x="589" y="388" width="1" height="2" fill="#000"/>
<rect x="595" y="388" width="1" height="10" fill="#000"/>
<rect x="601" y="388" width="1" height="2" fill="#000"/>
<rect x="607" y="388" width="1" height="2" fill="#000"/>
<rect x="613" y="388" width="1" height="2" fill="#000"/>
<rect x="619" y="388" width="1" height="2" fill="#000"/>
<rect x="625" y="388" width="1" height="5" fill="#000"/>
<rect x="632" y="388" width="1" height="2" fill="#000"/>
<rect x="638" y="388" width="1" height="2" fill="#000"/>
<rect x="644" y="388" width="1" height="2" fill="#000"/>
<rect x="650" y="388" width="1" height="2" fill="#000"/>
<rect x="656" y="388" width="1" height="10" fill="#000"/>
<rect x="662" y="388" width="1" height="2" fill="#000"/>
<rect x="668" y="388" width="1" height="2" fill="#000"/>
<rect x="675" y="388" width="1" height="2" fill="#000"/>
<rect x="681" y="388" width="1" height="2" fill="#000"/>
<rect x="687" y="388" width="1" height="5" fill="#000"/>
<rect x="693" y="388" width="1" height="2" fill="#000"/>
<rect x="699" y="388" width="1" height="2" fill="#000"/>
<rect x="705" y="388" width="1" height="2" fill="#000"/>
<rect x="711" y="388" width="1" height="2" fill="#000"/>
<rect x="718" y="388" width="1" height="10" fill="#000"/>
<rect x="724" y="388" width="1" height="2" fill="#000"/>
<rect x="730" y="388" width="1" height="2" fill="#000"/>
<rect x="736" y="388" width="1" height="2" fill="#000"/>
<rect x="742" y="388" width="1" height="2" fill="#000"/>
<rect x="748" y="388" width="1" height="5" fill="#000"/>
<rect x="754" y="388" width="1" height="2" fill="#000"/>
<rect x="761" y="388" width="1" height="2" fill="#000"/>
<rect x="767" y="388" width="1" height="2" fill="#000"/>
<rect x="773" y="388" width="1" height="2" fill="#000"/>
<rect x="779" y="388" width="1" height="10" fill="#000"/>
<rect x="785" y="388" width="1" height="2" fill="#000"/>
<rect x="791" y="388" width="1" height="2" fill="#000"/>
<rect x="797" y="388" width="1" height="2" fill="#000"/>
<rect x="804" y="388" width="1" height="2" fill="#000"/>
<rect x="810" y="388" width="1" height="5" fill="#000"/>
<rect x="816" y="388" width="1" height="2" fill="#000"/>
<rect x="822" y="388" width="1" height="2" fill="#000"/>
<rect x="828" y="388" width="1" height="2" fill="#000"/>
<rect x="834" y="388" width="1" height="2" fill="#000"/>
<rect x="840" y="388" width="1" height="10" fill="#000"/>
<rect x="847" y="388" width="1" height="2" fill="#000"/>
<rect x="853" y="388" width="1" height="2" fill="#000"/>
<rect x="859" y="388" width="1" height="2" fill="#000"/>
<rect x="865" y="388" width="1" height="2" fill="#000"/>
<rect x="871" y="388" width="1" height="5" fill="#000"/>
<rect x="877" y="388" width="1" height="2" fill="#000"/>
<rect x="883" y="388" width="1" height="2" fill="#000"/>
<rect x="890" y="388" width="1" height="2" fill="#000"/>
<rect x="896" y="388" width="1" height="2" fill="#000"/>
<rect x="902" y="388" width="1" height="10" fill="#000"/>
<text x="461.5" y="118.5" font-size="13" font-style="italic" text-anchor="end" fill="#000">600.00m</text>
<text x="461.5" y="174.5" font-size="13" font-style="italic" text-anchor="end" fill="#000">-200.00m</text>
<text x="461.5" y="190.5" font-size="13" font-style="italic" text-anchor="end" fill="#000">20.00</text>
<text x="461.5" y="247.5" font-size="13" font-style="italic" text-anchor="end" fill="#000">-20.00</text>
<text x="461.5" y="263.5" font-size="13" font-style="italic" text-anchor="end" fill="#000">200.00</text>
<text x="461.5" y="320.5" font-size="13" font-style="italic" text-anchor="end" fill="#000">-100.00</text>
<text x="461.5" y="336.5" font-size="13" font-style="italic" text-anchor="end" fill="#000">50.00</text>
<text x="461.5" y="392.5" font-size="13" font-style="italic" text-anchor="end" fill="#000">40.00</text>
<text x="465.1" y="412.4" font-size="13" font-style="italic" fill="#000">1.53m</text>
<text x="526.7" y="412.4" font-size="13" font-style="italic" fill="#000">1.54m</text>
<text x="588.2" y="412.4" font-size="13" font-style="italic" fill="#000">1.55m</text>
<text x="649.8" y="412.4" font-size="13" font-style="italic" fill="#000">1.56m</text>
<text x="711.4" y="412.4" font-size="13" font-style="italic" fill="#000">1.57m</text>
<text x="773.0" y="412.4" font-size="13" font-style="italic" fill="#000">1.58m</text>
<text x="834.5" y="412.4" font-size="13" font-style="italic" fill="#000">1.59m</text>
<text x="896.1" y="412.4" font-size="13" font-style="italic" fill="#000">1.60m</text>
<text x="678" y="431.3" font-size="13" fill="#000">Time (s)</text>
<text x="380" y="141" font-size="12.4" fill="#000">AM1</text>
<text x="380" y="213" font-size="12.4" fill="#000080">VG1</text>
<text x="380" y="286" font-size="12.4" fill="#808000">VM1</text>
<text x="380" y="359" font-size="12.4" fill="#008000">VM2</text>
<polyline fill="none" stroke="#800000" stroke-width="2" stroke-linejoin="miter" points="472.0,148.2 506.3,121.2 506.9,120.7 506.9,134.0 508.4,134.0 508.4,155.7 548.4,155.7 548.9,156.7 551.4,156.7"/>
<polyline fill="none" stroke="#800000" stroke-width="2.9" points="472.0,148.2 506.3,121.2"/>
<polyline fill="none" stroke="#800000" stroke-width="2" stroke-linejoin="miter" points="563.4,145.3 594.3,121.2 594.9,120.7 594.9,141.0 596.4,141.0 596.4,155.7 636.4,155.7 636.9,156.7 639.4,156.7"/>
<polyline fill="none" stroke="#800000" stroke-width="2.9" points="563.4,145.3 594.3,121.2"/>
<polyline fill="none" stroke="#800000" stroke-width="2" stroke-linejoin="miter" points="651.4,145.3 682.3,121.2 682.9,120.7 682.9,134.0 684.4,134.0 684.4,155.7 724.4,155.7 724.9,156.7 727.4,156.7"/>
<polyline fill="none" stroke="#800000" stroke-width="2.9" points="651.4,145.3 682.3,121.2"/>
<polyline fill="none" stroke="#800000" stroke-width="2" stroke-linejoin="miter" points="739.4,145.3 770.3,121.2 770.9,120.7 770.9,141.0 772.4,141.0 772.4,155.7 812.4,155.7 812.9,156.7 815.4,156.7"/>
<polyline fill="none" stroke="#800000" stroke-width="2.9" points="739.4,145.3 770.3,121.2"/>
<polyline fill="none" stroke="#800000" stroke-width="2" stroke-linejoin="miter" points="827.4,145.3 858.3,121.2 858.9,120.7 858.9,134.0 860.4,134.0 860.4,155.7 899.0,155.7 899.5,156.7 902.0,156.7"/>
<polyline fill="none" stroke="#800000" stroke-width="2.9" points="827.4,145.3 858.3,121.2"/>
<rect x="551.0" y="130" width="2" height="36" fill="#800000"/>
<polygon fill="#800000" points="552.8,143.5 564.9,143.5 566.4,145 564.0,146.9 561.0,149.6 558.3,153.4 555.7,159.6 553.0,166"/>
<rect x="639.0" y="130" width="2" height="36" fill="#800000"/>
<polygon fill="#800000" points="640.8,143.5 652.9,143.5 654.4,145 652.0,146.9 649.0,149.6 646.3,153.4 643.7,159.6 641.0,166"/>
<rect x="727.0" y="130" width="2" height="36" fill="#800000"/>
<polygon fill="#800000" points="728.8,143.5 740.9,143.5 742.4,145 740.0,146.9 737.0,149.6 734.3,153.4 731.7,159.6 729.0,166"/>
<rect x="815.0" y="130" width="2" height="36" fill="#800000"/>
<polygon fill="#800000" points="816.8,143.5 828.9,143.5 830.4,145 828.0,146.9 825.0,149.6 822.3,153.4 819.7,159.6 817.0,166"/>
<polyline fill="none" stroke="#000080" stroke-width="2" points="472.0,197.3 507.3,197.3 507.3,214.6 508.3,214.6 508.3,232.0 551.0,232.0 551.0,214.2 552.0,214.2 552.0,197.3 595.3,197.3 595.3,214.6 596.3,214.6 596.3,232.0 639.0,232.0 639.0,214.2 640.0,214.2 640.0,197.3 683.3,197.3 683.3,214.6 684.3,214.6 684.3,232.0 727.0,232.0 727.0,214.2 728.0,214.2 728.0,197.3 771.3,197.3 771.3,214.6 772.3,214.6 772.3,232.0 815.0,232.0 815.0,214.2 816.0,214.2 816.0,197.3 859.3,197.3 859.3,214.6 860.3,214.6 860.3,232.0 901.5,232.0 901.5,214.2"/>
<polyline fill="none" stroke="#808000" stroke-width="2" points="472.0,297.2 507.3,297.2 507.3,287.0 508.1,287.0 508.1,278.8 510.3,277.5 513.3,276.5 515.8,276.2 517.8,277.3 520.3,278.8 526.8,278.8 529.8,277.4 532.3,276.8 536.3,277.2 538.8,278.6 545.3,278.8 546.8,277.6 548.8,277.8 550.5,279.5 551.0,281.0 551.0,297.2 595.3,297.2 595.3,287.0 596.1,287.0 596.1,278.8 598.3,277.5 601.3,276.5 603.8,276.2 605.8,277.3 608.3,278.8 614.8,278.8 617.8,277.4 620.3,276.8 624.3,277.2 626.8,278.6 633.3,278.8 634.8,277.6 636.8,277.8 638.5,279.5 639.0,281.0 639.0,297.2 683.3,297.2 683.3,287.0 684.1,287.0 684.1,278.8 686.3,277.5 689.3,276.5 691.8,276.2 693.8,277.3 696.3,278.8 702.8,278.8 705.8,277.4 708.3,276.8 712.3,277.2 714.8,278.6 721.3,278.8 722.8,277.6 724.8,277.8 726.5,279.5 727.0,281.0 727.0,297.2 771.3,297.2 771.3,287.0 772.1,287.0 772.1,278.8 774.3,277.5 777.3,276.5 779.8,276.2 781.8,277.3 784.3,278.8 790.8,278.8 793.8,277.4 796.3,276.8 800.3,277.2 802.8,278.6 809.3,278.8 810.8,277.6 812.8,277.8 814.5,279.5 815.0,281.0 815.0,297.2 859.3,297.2 859.3,287.0 860.1,287.0 860.1,278.8 862.3,277.5 865.3,276.5 867.8,276.2 869.8,277.3 872.3,278.8 878.8,278.8 881.8,277.4 884.3,276.8 888.3,277.2 890.8,278.6 897.3,278.8 898.8,277.6 900.8,277.8"/>
<rect x="472" y="359" width="431" height="2" fill="#008000"/>
</svg>
</body></html>
